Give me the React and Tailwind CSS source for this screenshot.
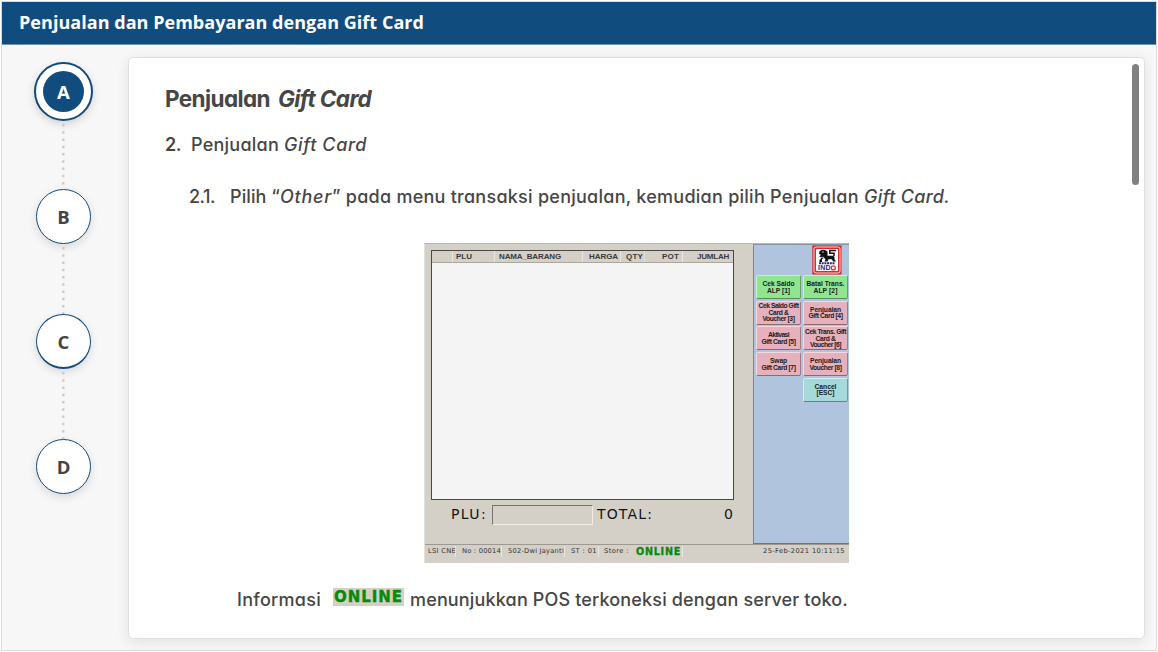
import { useLayoutEffect, useRef } from "react";

// Spreads a run of text over the width that its class name gives it.
function Fit({ className = "", children }) {
  const box = useRef(null);
  const run = useRef(null);
  useLayoutEffect(() => {
    const text = run.current;
    text.style.letterSpacing = "0px";
    const spare = box.current.getBoundingClientRect().width - text.getBoundingClientRect().width;
    text.style.letterSpacing = `${spare / Math.max(1, text.textContent.length)}px`;
  }, []);
  return (
    <span ref={box} className={`inline-block shrink-0 whitespace-pre ${className}`}>
      <span ref={run}>{children}</span>
    </span>
  );
}

function Dots({ className }) {
  return (
    <svg className={className} width="4" overflow="hidden">
      <line x1="2.3" y1="3" x2="2.3" y2="200" stroke="#cbcbcb" strokeWidth="2.4" strokeDasharray="2.4 4.85" />
    </svg>
  );
}

function Step({ letter, className = "" }) {
  return (
    <div
      className={`flex h-[55px] w-[55px] shrink-0 items-center justify-center rounded-full border border-[#114c7f] bg-white pt-px pl-px font-['Open_Sans',sans-serif] text-[18.5px] font-bold text-[#444] shadow-[0_3px_8px_rgba(0,0,0,0.13)] ${className}`}
    >
      {letter}
    </div>
  );
}

const buttons = [
  { lines: ["Cek Saldo", "ALP [1]"], widths: ["w-[32px]", "w-[23px]"], tone: "bg-[#90e690]" },
  { lines: ["Batal Trans.", "ALP [2]"], widths: ["w-[38px]", "w-[24px]"], tone: "bg-[#90e690]" },
  { lines: ["Cek Saldo Gift", "Card &", "Voucher [3]"], widths: ["w-[40px]", "w-[20px]", "w-[32px]"], tone: "bg-[#e6b0bc]" },
  { lines: ["Penjualan", "Gift Card [4]"], widths: ["w-[31px]", "w-[34px]"], tone: "bg-[#e6b0bc]" },
  { lines: ["Aktivasi", "Gift Card [5]"], widths: ["w-[21px]", "w-[34px]"], tone: "bg-[#e6b0bc]" },
  { lines: ["Cek Trans. Gift", "Card &", "Voucher [6]"], widths: ["w-[41px]", "w-[20px]", "w-[31px]"], tone: "bg-[#e6b0bc]" },
  { lines: ["Swap", "Gift Card [7]"], widths: ["w-[17px]", "w-[34px]"], tone: "bg-[#e6b0bc]" },
  { lines: ["Penjualan", "Voucher [8]"], widths: ["w-[31px]", "w-[32px]"], tone: "bg-[#e6b0bc]" },
  null,
  { lines: ["Cancel", "[ESC]"], widths: ["w-[22px]", "w-[18px]"], tone: "bg-[#a6dada]" },
];

function PosButton({ item }) {
  if (!item) return <div />;
  return (
    <div
      className={`flex h-[24px] flex-col items-center justify-center overflow-hidden rounded-[2px] border border-t-white/50 border-r-black/30 border-b-black/40 border-l-white/50 pt-px font-['Liberation_Sans',sans-serif] text-[6.7px] leading-[6.6px] font-bold text-[#202020] ${item.tone}`}
    >
      {item.lines.map((line, i) => (
        <Fit key={line} className={item.widths[i]}>{line}</Fit>
      ))}
    </div>
  );
}

function Logo() {
  return (
    <svg className="ml-[58px] block" width="30" height="30" viewBox="0 0 30 30">
      <rect x="0.3" y="0.3" width="29.2" height="29.2" fill="#d92b2b" />
      <rect x="2" y="2" width="26" height="26" rx="2" fill="none" stroke="#fff" strokeWidth="0.8" />
      <rect x="4" y="4" width="22" height="22" rx="1" fill="#fff" />
      <path d="M7.5 6.2 10 4.8l3 .2 2.5 1.5v4.3h5.5l1.5 1v2.5l1.5 2.2h-3l-1.2-2.3h-3.3l-1 2.3h-3l1-2.5-1.5-1-2 1v3H7.5v-2l1.3-1v-2L7 11.5l2-1.5-2-1.3z" fill="#111" />
      <path d="M22 11V8.2h-4.2V5.6H24" fill="none" stroke="#111" strokeWidth="1.5" />
      <path d="M10 7h2M9 12.4h3" stroke="#fff" strokeWidth="0.7" />
      <path d="M7 18.3h16" stroke="#26267c" strokeWidth="2" strokeDasharray="2 0.7" />
      <text x="6" y="25.3" textLength="12.5" fontFamily="Liberation Sans" fontWeight="bold" fontSize="7" fill="#25258a">IND</text>
      <circle cx="21.3" cy="22.9" r="2" fill="none" stroke="#e03030" strokeWidth="1.3" />
    </svg>
  );
}

function PosScreen() {
  return (
    <div className="flex h-[320px] w-[425px] flex-col border-t border-l border-t-[#bbb8b1] border-l-[#e3e0da] bg-[#d4d0c8] font-['DejaVu_Sans',sans-serif] text-[#222]">
      <div className="flex h-[300px] shrink-0">
        <div className="w-[328px] pt-[6px] pl-[6px]">
          <div className="h-[250px] w-[303px] border border-[#484848] bg-[#f4f4f4]">
            <div className="flex h-[12px] items-center border-b border-[#aaa79f] bg-[#d4d0c8] font-['Liberation_Sans',sans-serif] text-[8px] leading-[12px] font-bold text-[#3a3a3a]">
              <div className="h-[11px] w-[21px] border-r border-white/50" />
              <div className="h-[11px] w-[42px] border-r border-white/50 pl-[3px]"><Fit className="w-[16px]">PLU</Fit></div>
              <div className="h-[11px] w-[88px] border-r border-white/50 pl-[4px]"><Fit className="w-[62px]">NAMA_BARANG</Fit></div>
              <div className="h-[11px] w-[38px] border-r border-white/50 pl-[6px]"><Fit className="w-[29px]">HARGA</Fit></div>
              <div className="h-[11px] w-[24px] border-r border-white/30 pl-[5px]"><Fit className="w-[17px]">QTY</Fit></div>
              <div className="h-[11px] w-[38px] border-r border-white/50 pl-[17px]"><Fit className="w-[17px]">POT</Fit></div>
              <div className="h-[11px] pl-[14px]"><Fit className="w-[32px]">JUMLAH</Fit></div>
            </div>
          </div>
          <div className="flex h-[28px] items-center pl-[20px] text-[14px] leading-[18px] text-[#151515]">
            <Fit className="w-[36px]">PLU:</Fit>
            <div className="mt-[2px] ml-[5px] h-[20px] w-[101px] border border-t-[#77746d] border-r-[#f0eee8] border-b-[#f0eee8] border-l-[#77746d]" />
            <Fit className="ml-[4px] w-[56px]">TOTAL:</Fit>
            <span className="ml-[71px]">0</span>
          </div>
        </div>
        <div className="h-[300px] w-[96px] border-t border-b border-l border-t-[#8694a8] border-b-[#66768d] border-l-[#7d8590] bg-[#b0c4de]">
          <Logo />
          <div className="ml-[2px] grid grid-cols-[45px_45px] gap-x-[2px] gap-y-[1.7px]">
            {buttons.map((item, i) => <PosButton key={i} item={item} />)}
          </div>
        </div>
      </div>
      <div className="flex h-[13px] shrink-0 items-center border-t border-[#9c9992] text-[6.7px] leading-[11px] text-[#333]">
        <div className="flex h-[11px] w-[31px] items-center border-r border-white/50 pl-[3px]"><Fit className="w-[28px]">LSI CNE</Fit></div>
        <div className="flex h-[11px] w-[46px] items-center border-r border-white/50 pl-[6px]"><Fit className="w-[39px]">No : 00014</Fit></div>
        <div className="flex h-[11px] w-[63px] items-center border-r border-white/50 pl-[6px]"><Fit className="w-[56px]">502-Dwi Jayanti</Fit></div>
        <div className="flex h-[11px] w-[34px] items-center border-r border-white/50 pl-[6px]"><Fit className="w-[26px]">ST : 01</Fit></div>
        <div className="flex h-[11px] w-[84px] items-center border-r border-white/50 pl-[5px]">
          <Fit className="w-[25px]">Store :</Fit>
          <Fit className="ml-[7px] w-[45px] text-[9.6px] font-bold text-[#078a07] [-webkit-text-stroke:0.3px]">ONLINE</Fit>
        </div>
        <Fit className="ml-[80px] w-[82px]">25-Feb-2021 10:11:15</Fit>
      </div>
    </div>
  );
}

export default function App() {
  return (
    <div className="h-[652px] w-[1158px] overflow-hidden bg-white p-px">
      <div className="flex h-[650px] w-[1156px] flex-col border border-[#dcdcdc] bg-[#f7f7f7]">
        <header className="flex h-[43px] shrink-0 items-center border-b border-[#6f93b2] bg-[#114c7f] pb-[2px] pl-[17px] font-['Open_Sans',sans-serif] text-[18px] leading-[24px] font-bold text-white">
          <Fit className="w-[405px]">Penjualan dan Pembayaran dengan Gift Card</Fit>
        </header>
        <div className="flex h-[605px]">
          <nav className="flex w-[122px] flex-col items-center pt-[17px]">
            <div className="flex h-[59px] w-[59px] shrink-0 items-center justify-center rounded-full border-[2.5px] border-[#114c7f] bg-white shadow-[0_3px_8px_rgba(0,0,0,0.15)]">
              <div className="flex h-[41px] w-[41px] items-center justify-center rounded-full bg-[#114c7f] pl-px font-['Open_Sans',sans-serif] text-[18.5px] font-bold text-white">A</div>
            </div>
            <Dots className="h-[68px] shrink-0" />
            <Step letter="B" />
            <Dots className="h-[70px] shrink-0" />
            <Step letter="C" className="border-b-2 pt-[3px]" />
            <Dots className="h-[70px] shrink-0" />
            <Step letter="D" />
          </nav>
          <main className="mt-[12px] ml-[4px] flex h-[582px] w-[1017px] rounded-[5px] border border-[#e0e0e0] bg-white font-['Inter',sans-serif] text-[18px] leading-[26px] font-medium text-[#464646] shadow-[0_3px_14px_rgba(0,0,0,0.09)] [font-feature-settings:'cv11']">
            <div className="w-[1003px] pl-[36px]">
              <h1 className="mt-[28px] flex h-[26px] items-baseline text-[22.5px] font-bold">
                <Fit className="w-[105px]">Penjualan</Fit>
                <Fit className="ml-[8px] w-[93px] italic">Gift Card</Fit>
              </h1>
              <h2 className="mt-[20px] flex h-[26px] items-baseline">
                <Fit className="w-[16px] font-semibold">2.</Fit>
                <Fit className="ml-[10px] w-[88px]">Penjualan</Fit>
                <Fit className="ml-[5px] w-[83px] italic">Gift Card</Fit>
              </h2>
              <div className="mt-[26px] flex h-[26px] items-baseline pl-[24px]">
                <Fit className="w-[26px]">2.1.</Fit>
                <Fit className="ml-[15px] w-[50px]">Pilih “</Fit>
                <Fit className="w-[52px] italic">Other</Fit>
                <Fit className="w-[433px]">” pada menu transaksi penjualan, kemudian pilih</Fit>
                <Fit className="ml-[5px] w-[89px]">Penjualan</Fit>
                <Fit className="ml-[5px] w-[86px] italic">Gift Card.</Fit>
              </div>
              <div className="mt-[33px] ml-[259px]">
                <PosScreen />
              </div>
              <div className="mt-[24px] flex h-[26px] items-start pl-[72px]">
                <Fit className="w-[84px]">Informasi</Fit>
                <span className="mt-px ml-[12px] flex h-[18px] w-[71px] items-center justify-center bg-[#d4d0c8] font-['DejaVu_Sans',sans-serif] text-[15px] leading-[18px] font-bold text-[#078a07] [-webkit-text-stroke:0.4px]">
                  <Fit className="w-[69px]">ONLINE</Fit>
                </span>
                <Fit className="ml-[6px] w-[438px]">menunjukkan POS terkoneksi dengan server toko.</Fit>
              </div>
            </div>
            <div className="mt-[6px] h-[121px] w-[7px] rounded-full bg-[#808080]" />
          </main>
        </div>
      </div>
    </div>
  );
}
